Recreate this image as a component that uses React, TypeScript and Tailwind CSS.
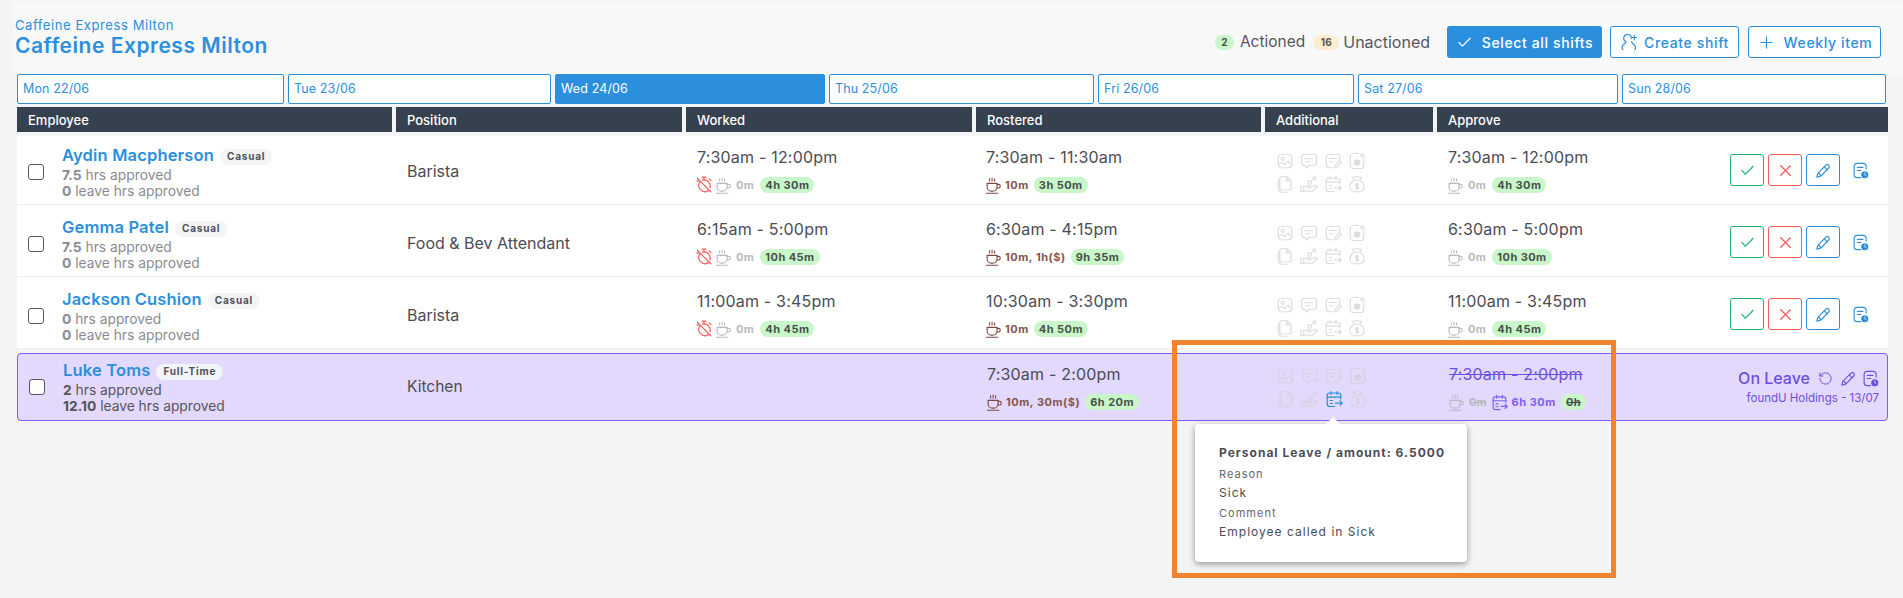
import React from "react";
import { Check, X, Plus, RotateCcw } from "lucide-react";

type IP = { className?: string; size?: number };
const S = ({ className, size = 16, children, w = 1.6 }: IP & { children: React.ReactNode; w?: number }) => (
  <svg width={size} height={size} viewBox="0 0 24 24" fill="none" stroke="currentColor" strokeWidth={w} strokeLinecap="round" strokeLinejoin="round" className={`shrink-0 ${className ?? ""}`}>
    {children}
  </svg>
);
const Cup = (p: IP) => (
  <S {...p}>
    <path d="M3 9h14v5a6 6 0 0 1-6 6H9a6 6 0 0 1-6-6V9Z" />
    <path d="M17 10.500h2a2.500 2.500 0 0 1 0 5h-2.400" />
    <path d="M2 23h16" />
    <path d="M6.500 2.500v3M10 1.500v4M13.500 2.500v3" strokeDasharray="1.400 1.200" />
  </S>
);
const AlarmOff = (p: IP) => (
  <S {...p}>
    <path d="M6.500 7.500a8.500 8.500 0 0 0 11.500 12M20 16a8.500 8.500 0 0 0-10-10.500" />
    <path d="M9.500 1.500h5M12 1.500v3M19 4l2 2M3 3l18 18M4.500 5.500 3 7" />
  </S>
);
const Photo = (p: IP) => (
  <S {...p}>
    <rect x="3" y="3" width="18" height="18" rx="4" />
    <circle cx="9" cy="9" r="2" />
    <path d="m3 17 5-3 4 3 4-5 5 5" />
  </S>
);
const Chat = (p: IP) => (
  <S {...p}>
    <path d="M6 3h12a4 4 0 0 1 4 4v7a4 4 0 0 1-4 4h-6l-4 3.500V18H6a4 4 0 0 1-4-4V7a4 4 0 0 1 4-4Z" />
    <path d="M7 9h10M7 13h6" />
  </S>
);
const Note = (p: IP) => (
  <S {...p}>
    <path d="M21 11V7a4 4 0 0 0-4-4H7a4 4 0 0 0-4 4v10a4 4 0 0 0 4 4h4" />
    <path d="M7.500 8.500h9M7.500 13h5M14 21l.6-3 6-6 2.400 2.400-6 6Z" />
  </S>
);
const FileDot = (p: IP) => (
  <S {...p}>
    <path d="M14 2H7a4 4 0 0 0-4 4v12a4 4 0 0 0 4 4h10a4 4 0 0 0 4-4V9" />
    <circle cx="19" cy="4.500" r="2" />
    <circle cx="12" cy="14" r="3.500" fill="currentColor" />
  </S>
);
const Pages = (p: IP) => (
  <S {...p}>
    <path d="M14 2H8a3 3 0 0 0-3 3v12a3 3 0 0 0 3 3h9a3 3 0 0 0 3-3V8Z" />
    <path d="M14 2v3a3 3 0 0 0 3 3h3M5 6a3 3 0 0 0-2 3v9a5 5 0 0 0 5 5h7" />
  </S>
);
const HandCoin = (p: IP) => (
  <S {...p}>
    <circle cx="13" cy="10" r="2.500" />
    <circle cx="19" cy="4.500" r="2" />
    <path d="M1 15h4v7H1zM5 16l4-1.500h4l2 1.500-3.500 1.500H10M15 16l5-2 3 1-6 6.500H5" />
  </S>
);
const CalArrow = (p: IP) => (
  <S {...p}>
    <path d="M21 12V7a3 3 0 0 0-3-3H6a3 3 0 0 0-3 3v12a3 3 0 0 0 3 3h7" />
    <path d="M3 9.500h18M8 2v4M16 2v4M7 14h3M7 18h3M14 17.500h9M20 14.500l3 3-3 3" />
  </S>
);
const Bag = (p: IP) => (
  <S {...p}>
    <path d="M8 7 6 3.500C7 2 9 3 10 2.500s3-.8 4 0 3 0 4 1L16 7" />
    <path d="M8 7h8c3 2 5.500 6 5.500 9.500S18 22.500 12 22.500 2.500 20 2.500 16.500 5 9 8 7Z" />
    <path d="M14 12.500c-1-1-4-1-4 .8s4 1.200 4 3-3 1.800-4 .8M12 10.500v9" />
  </S>
);
const DocClock = (p: IP) => (
  <S {...p}>
    <path d="M20 10V6a4 4 0 0 0-4-4H7a4 4 0 0 0-4 4v12a4 4 0 0 0 4 4h5" />
    <path d="M7.500 7.500h8M7.500 12h5" />
    <circle cx="18" cy="18" r="5" fill="currentColor" stroke="none" />
    <path d="M18 15.500V18l1.500 1" stroke="#fff" strokeWidth="1" />
  </S>
);
const PencilIcon = (p: IP) => (
  <S {...p}>
    <path d="M15.500 4.500 4 16l-1.500 5.500L8 20 19.500 8.500a2.800 2.800 0 0 0-4-4Z" />
    <path d="m13 7 4 4M5 15.500 8.500 19" />
  </S>
);
const UserPlus = (p: IP) => (
  <S {...p}>
    <path d="M15 7.500A5 5 0 1 0 8 11.500c-.5 3-3 3-4.500 5.500S3 22 4 22M15.500 11.500c.5 3 3 3 4.500 5.500s.5 5-.5 5" />
    <path d="M19 3v6M16 6h6" />
  </S>
);

const Pill = ({ children, className = "" }: { children: React.ReactNode; className?: string }) => (
  <span className={`inline-flex h-4 items-center justify-center rounded-full bg-[#c9f7c9] px-[5px] text-[11px] font-bold tracking-[0.04em] text-[#47524a] ${className}`}>{children}</span>
);

const Additional = ({ active }: { active?: boolean }) => {
  const cls = active ? "text-[#d6d3e0]" : "text-[#dcdde1]";
  return (
    <div className={`grid w-[96px] grid-cols-4 justify-items-center gap-y-[5px] ${active ? "" : "mt-[4px]"}`}>
      <Photo size={18} className={cls} /><Chat size={18} className={cls} /><Note size={18} className={cls} /><FileDot size={18} className={cls} />
      <Pages size={18} className={cls} /><HandCoin size={18} className={cls} />
      <CalArrow size={18} className={active ? "text-[#2b8fde]" : cls} /><Bag size={18} className={cls} />
    </div>
  );
};

const Btn = ({ c, children }: { c: string; children: React.ReactNode }) => (
  <button className={`flex h-8 w-[34px] items-center justify-center rounded-[3px] border bg-white ${c}`}>{children}</button>
);

const Actions = () => (
  <div className="ml-auto flex items-center">
    <div className="flex gap-[4px]">
      <Btn c="border-[#18b368] text-[#18b368]"><Check size={17} strokeWidth={1.6} /></Btn>
      <Btn c="border-[#f45b5b] text-[#f45b5b]"><X size={19} strokeWidth={1.6} /></Btn>
      <Btn c="border-[#2b8fde] text-[#2b8fde]"><PencilIcon size={17} /></Btn>
    </div>
    <DocClock size={17} className="ml-[12px] mr-[19px] text-[#2b8fde]" />
  </div>
);

const cols = "grid grid-cols-[375px_286px_286px_285px_168px_451px] gap-x-[4px]";

type Row = {
  name: string; tag: string; hrs: string; leave: string; pos: string;
  worked: string; wbreak: string; wpill: string;
  rost: string; rbreak: string; rpill: string;
  appr: string; abreak: string; apill: string;
};
const rows: Row[] = [
  { name: "Aydin Macpherson", tag: "Casual", hrs: "7.5", leave: "0", pos: "Barista", worked: "7:30am - 12:00pm", wbreak: "0m", wpill: "4h 30m", rost: "7:30am - 11:30am", rbreak: "10m", rpill: "3h 50m", appr: "7:30am - 12:00pm", abreak: "0m", apill: "4h 30m" },
  { name: "Gemma Patel", tag: "Casual", hrs: "7.5", leave: "0", pos: "Food & Bev Attendant", worked: "6:15am - 5:00pm", wbreak: "0m", wpill: "10h 45m", rost: "6:30am - 4:15pm", rbreak: "10m, 1h($)", rpill: "9h 35m", appr: "6:30am - 5:00pm", abreak: "0m", apill: "10h 30m" },
  { name: "Jackson Cushion", tag: "Casual", hrs: "0", leave: "0", pos: "Barista", worked: "11:00am - 3:45pm", wbreak: "0m", wpill: "4h 45m", rost: "10:30am - 3:30pm", rbreak: "10m", rpill: "4h 50m", appr: "11:00am - 3:45pm", abreak: "0m", apill: "4h 45m" },
];

const Time = ({ children, className = "" }: { children: React.ReactNode; className?: string }) => (
  <div className={`text-[16px] leading-5 tracking-[0.012em] text-[#4b4c55] ${className}`}>{children}</div>
);
const Sub = ({ children }: { children: React.ReactNode }) => (
  <div className="mt-[10px] flex h-4 items-center">{children}</div>
);
const GrayBreak = ({ t }: { t: string }) => (
  <>
    <Cup size={17} className="-ml-[1px] text-[#b9b9bd]" />
    <span className="ml-[4px] mr-[6px] text-[11px] font-bold tracking-[0.04em] text-[#b9b9bd]">{t}</span>
  </>
);
const BrownBreak = ({ t }: { t: string }) => (
  <>
    <Cup size={17} className="-ml-[1px] text-[#7d4a42]" />
    <span className="ml-[3px] mr-[5px] text-[11px] font-bold tracking-[0.05em] text-[#85554d]">{t}</span>
  </>
);

const Who = ({ name, tag, hrs, leave, dark }: { name: string; tag: string; hrs: string; leave: string; dark?: boolean }) => (
  <div className={`flex items-center pl-[11px] ${dark ? "" : "mt-[4px]"}`}>
    <input type="checkbox" className="h-4 w-4 appearance-none rounded-[3px] border border-[#55565c] bg-white" />
    <div className="ml-[18px]">
      <div className="flex items-center">
        <span className="text-[16.500px] font-semibold leading-5 tracking-[0.01em] text-[#2b8fde]">{name}</span>
        <span className="ml-[6px] mt-[3px] flex h-4 items-center rounded-full bg-[#f3f4f6] px-[7px] text-[10px] font-bold tracking-[0.08em] text-[#4f5058]">{tag}</span>
      </div>
      <div className={`mt-[2px] text-[13.800px] leading-4 ${dark ? "text-[#55565c]" : "text-[#8b8b90]"}`}><b className="font-bold">{hrs}</b> hrs approved</div>
      <div className={`text-[13.800px] leading-4 ${dark ? "text-[#55565c]" : "text-[#8b8b90]"}`}><b className="font-bold">{leave}</b> leave hrs approved</div>
    </div>
  </div>
);

const days = [
  ["Mon 22/06", "w-[267px]"], ["Tue 23/06", "w-[263px]"], ["Wed 24/06", "w-[270px]"], ["Thu 25/06", "w-[265px]"],
  ["Fri 26/06", "w-[256px]"], ["Sat 27/06", "w-[260px]"], ["Sun 28/06", "w-[264px]"],
] as const;

export default function App() {
  return (
    <div className="relative h-[598px] w-[1903px] overflow-hidden bg-[#f3f4f6] pt-[2px] font-['Inter','Noto_Sans',sans-serif]">
      <div className="ml-[13px] flex h-[72px] items-start justify-between bg-[#f8f8f8] pl-[2px] pr-[22px] pt-[15px]">
        <div>
          <div className="text-[13px] leading-4 tracking-[0.045em] text-[#2b8fde]">Caffeine Express Milton</div>
          <div className="mt-[1px] text-[21px] font-semibold leading-6 tracking-[0.025em] text-[#2b8fde]">Caffeine Express Milton</div>
        </div>
        <div className="mt-[9px] flex h-8 items-center">
          <span className="flex h-[15px] w-[19px] items-center justify-center rounded-full bg-[#c9f7c9] text-[10px] font-bold text-[#47524a]">2</span>
          <span className="ml-[6px] text-[15.500px] text-[#55565c]">Actioned</span>
          <span className="ml-[8px] flex h-[15px] w-[26px] items-center justify-center rounded-full bg-[#fdeccf] text-[10px] font-bold text-[#5b5348]">16</span>
          <span className="ml-[4px] text-[16px] text-[#55565c]">Unactioned</span>
          <button className="ml-[17px] flex h-8 w-[155px] items-center justify-center gap-[9px] rounded-[3px] bg-[#2b8fde] text-[14px] font-medium tracking-[0.045em] text-white"><Check size={17} strokeWidth={1.6} />Select all shifts</button>
          <button className="ml-[8px] flex h-8 w-[129px] items-center justify-center gap-[6px] rounded-[3px] border border-[#2b8fde] bg-white text-[14px] font-medium tracking-[0.045em] text-[#2b8fde]"><UserPlus size={18} />Create shift</button>
          <button className="ml-[9px] flex h-8 w-[133px] items-center justify-center gap-[8px] rounded-[3px] border border-[#2b8fde] bg-white text-[14px] font-medium tracking-[0.045em] text-[#2b8fde]"><Plus size={19} strokeWidth={1.5} />Weekly item</button>
        </div>
      </div>

      <div className="pl-[17px]">
        <div className="flex gap-[4px]">
          {days.map(([d, w], i) => (
            <div key={d} className={`flex h-[30px] items-center rounded-[2px] border border-[#2b8fde] pl-[5px] text-[12.500px] tracking-[0.01em] ${w} ${i === 2 ? "bg-[#2b8fde] text-white" : "bg-white text-[#2b8fde]"}`}>{d}</div>
          ))}
        </div>
        <div className={`${cols} mt-[3px]`}>
          {["Employee", "Position", "Worked", "Rostered", "Additional", "Approve"].map((h) => (
            <div key={h} className="flex h-[25px] items-center bg-[#36414f] pl-[11px] pt-[2px] text-[13px] font-medium text-white">{h}</div>
          ))}
        </div>
        <div className="mt-[4px] w-[1871px]">
          {rows.map((r) => (
            <div key={r.name} className={`${cols} h-[72px] items-center border-b border-[#eeeeef] bg-white pt-[3px] first:h-[69px] first:pt-0`}>
              <Who name={r.name} tag={r.tag} hrs={r.hrs} leave={r.leave} />
              <div className="mt-[2px] pl-[11px] text-[16px] text-[#4b4c55]">{r.pos}</div>
              <div className="pl-[11px]">
                <Time>{r.worked}</Time>
                <Sub><AlarmOff size={18} className="-ml-[2px] mr-[3px] text-[#f45b5b]" /><GrayBreak t={r.wbreak} /><Pill>{r.wpill}</Pill></Sub>
              </div>
              <div className="pl-[10px]">
                <Time>{r.rost}</Time>
                <Sub><BrownBreak t={r.rbreak} /><Pill>{r.rpill}</Pill></Sub>
              </div>
              <div className="pl-[8px]"><Additional /></div>
              <div className="flex items-center pl-[11px]">
                <div>
                  <Time>{r.appr}</Time>
                  <Sub><GrayBreak t={r.abreak} /><Pill>{r.apill}</Pill></Sub>
                </div>
                <Actions />
              </div>
            </div>
          ))}
          <div className={`${cols} mt-[4px] h-[68px] items-center rounded-[4px] border border-[#7f5cf6] bg-[#e2d9fc]`}>
            <Who name="Luke Toms" tag="Full-Time" hrs="2" leave="12.10" dark />
            <div className="pl-[10px] text-[15.500px] text-[#4b4c55]">Kitchen</div>
            <div />
            <div className="pl-[10px]">
              <Time>7:30am - 2:00pm</Time>
              <Sub><BrownBreak t="10m, 30m($)" /><Pill>6h 20m</Pill></Sub>
            </div>
            <div className="pl-[8px]"><Additional active /></div>
            <div className="flex items-center pl-[11px]">
              <div>
                <Time className="text-[#6d4fe0] line-through">7:30am - 2:00pm</Time>
                <Sub>
                  <Cup size={17} className="-ml-[1px] text-[#b9b9bd]" />
                  <span className="ml-[4px] mr-[5px] text-[11px] font-bold text-[#b9b9bd] line-through">0m</span>
                  <CalArrow size={17} className="text-[#7f5cf6]" />
                  <span className="ml-[3px] mr-[5px] text-[11px] font-bold tracking-[0.05em] text-[#7f5cf6]">6h 30m</span>
                  <Pill className="line-through">0h</Pill>
                </Sub>
              </div>
              <div className="ml-auto mr-[10px] text-right">
                <div className="flex items-center justify-end text-[#6d4fe0]">
                  <span className="text-[16px] font-medium leading-5">On Leave</span>
                  <RotateCcw size={15} strokeWidth={1.6} className="ml-[8px]" />
                  <PencilIcon size={17} className="ml-[7px]" />
                  <DocClock size={17} className="ml-[5px]" />
                </div>
                <div className="mt-[2px] text-[11.500px] leading-4 text-[#6d4fe0]">foundU Holdings - 13/07</div>
              </div>
            </div>
          </div>
        </div>
      </div>

      {/* highlight frame */}
      <div className="pointer-events-none absolute left-[1172px] top-[340px] h-[238px] w-[444px] border-[5px] border-[#f2832f]" />

      {/* tooltip */}
      <div className="absolute left-[1195px] top-[424px] h-[138px] w-[272px] rounded-[4px] bg-white pl-[24px] pt-[21px] text-[12px] leading-4 tracking-[0.085em] text-[#4b4c55] shadow-[0_2px_6px_rgba(0,0,0,0.4)]">
        <div className="absolute -top-[5px] left-[133px] h-[10px] w-[10px] rotate-45 bg-white" />
        <div className="relative font-bold">Personal Leave / amount: 6.5000</div>
        <div className="mt-[5px] text-[11px] text-[#66676e]">Reason</div>
        <div className="mt-[3px]">Sick</div>
        <div className="mt-[4px] text-[11px] text-[#66676e]">Comment</div>
        <div className="mt-[3px]">Employee called in Sick</div>
      </div>
    </div>
  );
}
